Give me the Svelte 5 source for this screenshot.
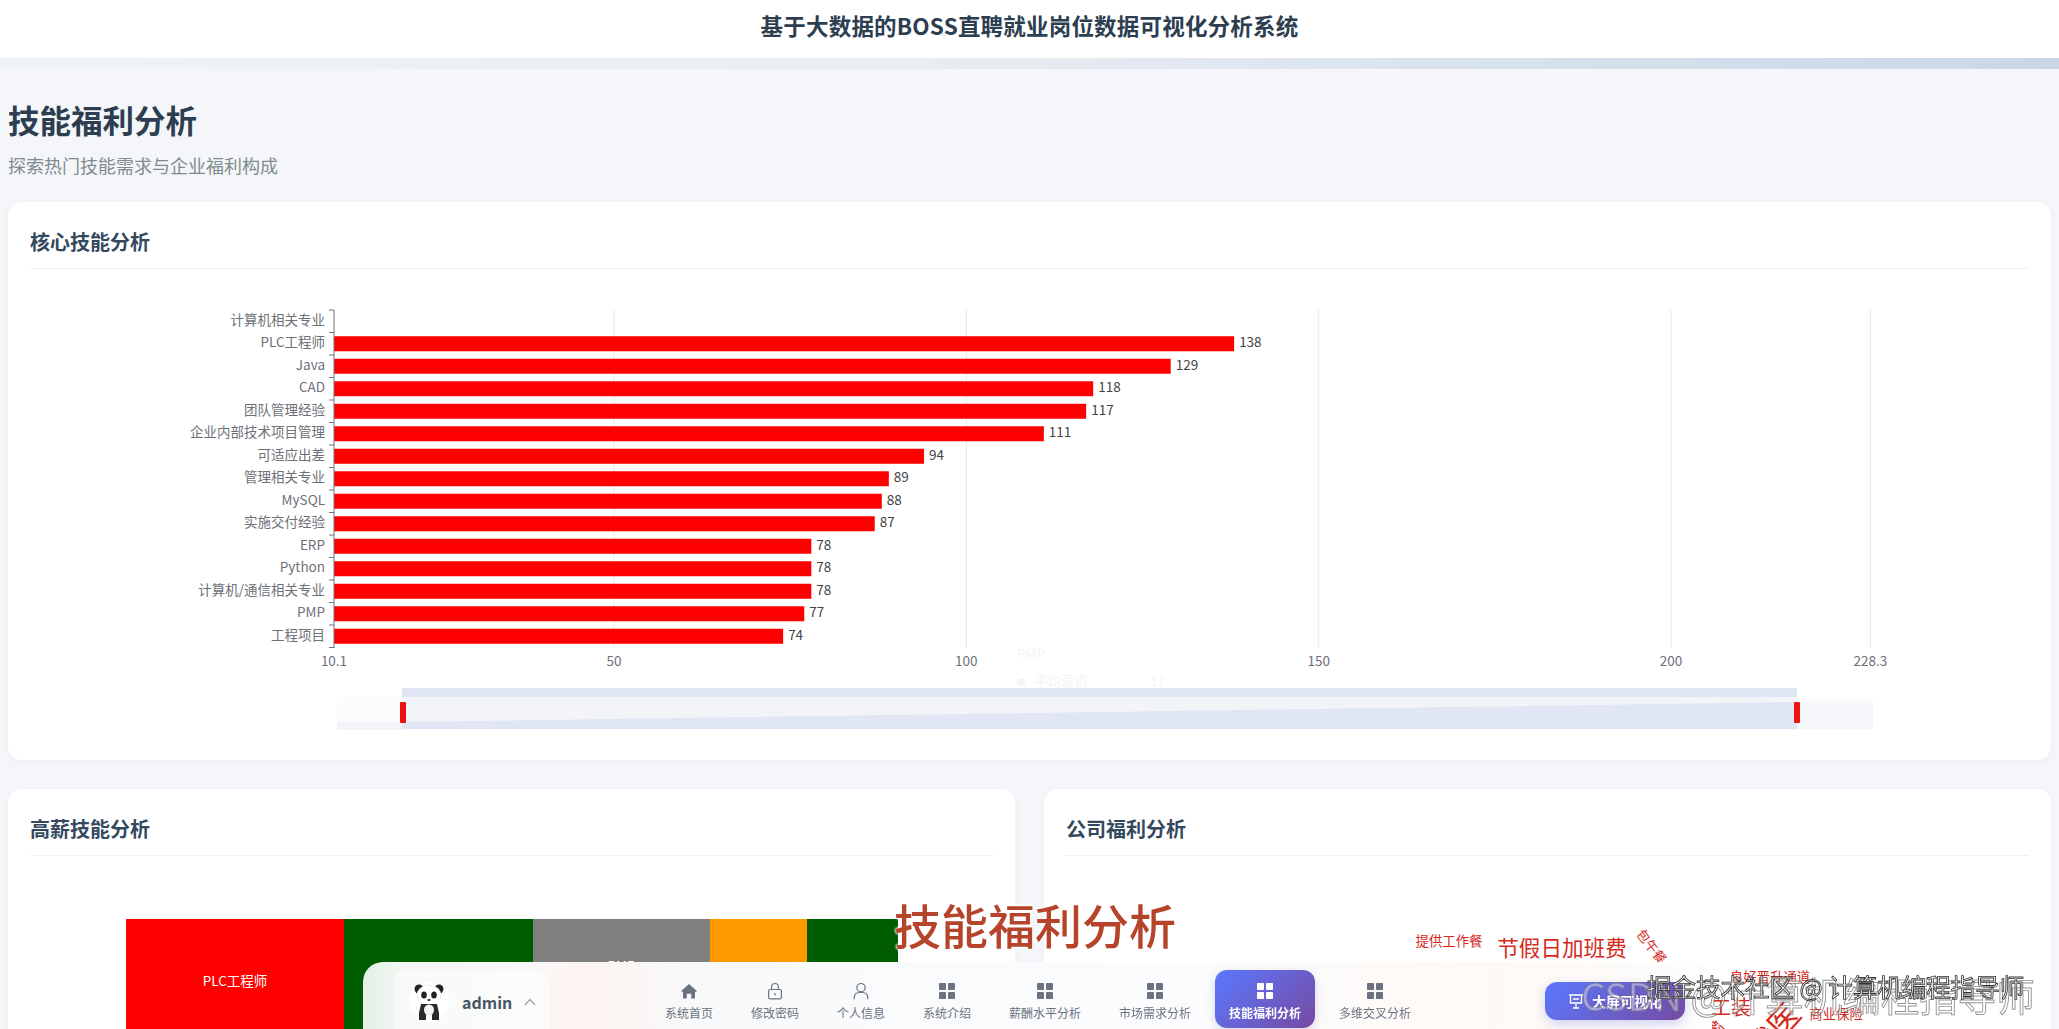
<script>
  // page coordinates are used as the chart's viewBox
  const skills = [
    ["计算机相关专业", null],
    ["PLC工程师", 138],
    ["Java", 129],
    ["CAD", 118],
    ["团队管理经验", 117],
    ["企业内部技术项目管理", 111],
    ["可适应出差", 94],
    ["管理相关专业", 89],
    ["MySQL", 88],
    ["实施交付经验", 87],
    ["ERP", 78],
    ["Python", 78],
    ["计算机/通信相关专业", 78],
    ["PMP", 77],
    ["工程项目", 74],
  ];
  const axisX = 334;
  const axisTop = 310;
  const band = 22.5;
  const scaleX = (v) => 614 + (v - 50) * 7.047;
  const ticks = [10.1, 50, 100, 150, 200, 228.3];

  const tiles = [
    { name: "PLC工程师", width: 218, color: "#ff0000", top: 52 },
    { name: "", width: 189, color: "#005c00", top: 0 },
    { name: "PMP", width: 177, color: "#808080", top: 37 },
    { name: "", width: 97, color: "#ff9900", top: 0 },
    { name: "", width: 91, color: "#005c00", top: 0 },
  ];

  const words = [
    { text: "提供工作餐", x: 1449, y: 940, size: 13.4, rot: 0 },
    { text: "节假日加班费", x: 1562, y: 946, size: 21.6, rot: 0 },
    { text: "包午餐", x: 1652, y: 946, size: 13, rot: 52 },
    { text: "带薪年假", x: 1445, y: 970, size: 17, rot: 0 },
    { text: "良好晋升通道", x: 1770, y: 976, size: 13.4, rot: 0 },
    { text: "工装", x: 1731, y: 1006, size: 20, rot: 0 },
    { text: "商业保险", x: 1836, y: 1013, size: 13.4, rot: 0 },
    { text: "就医", x: 1772, y: 1030, size: 31, rot: -48 },
    { text: "餐补", x: 1722, y: 1036, size: 20, rot: 40 },
  ];

  const navItems = [
    { label: "系统首页", icon: "home" },
    { label: "修改密码", icon: "lock" },
    { label: "个人信息", icon: "user" },
    { label: "系统介绍", icon: "grid" },
    { label: "薪酬水平分析", icon: "grid" },
    { label: "市场需求分析", icon: "grid" },
    { label: "技能福利分析", icon: "grid", active: true },
    { label: "多维交叉分析", icon: "grid" },
  ];
</script>

<header class="top">基于大数据的BOSS直聘就业岗位数据可视化分析系统</header>
<div class="strip"></div>

<main class="page">
  <h1>技能福利分析</h1>
  <p class="sub">探索热门技能需求与企业福利构成</p>

  <section class="card wide">
    <h2>核心技能分析</h2>
    <svg class="chart" width="1999" height="480" viewBox="30 269 1999 480">
      {#each ticks.slice(1) as t}
        <line x1={scaleX(t)} x2={scaleX(t)} y1={axisTop} y2="648" stroke="#e4e8f0" />
      {/each}

      {#each skills as [name, value], i}
        {@const cy = axisTop + band * i + band / 2}
        <text class="lbl" x="325" y={cy} text-anchor="end">{name}</text>
        {#if value}
          <rect x={axisX} y={cy - 7.5} width={scaleX(value) - axisX} height="15" fill="#ff0000" />
          <text class="val" x={scaleX(value) + 5} y={cy}>{value}</text>
        {/if}
      {/each}

      <line x1={axisX} x2={axisX} y1={axisTop} y2="648" stroke="#6e7079" />
      {#each skills as _, i}
        <line x1="329" x2={axisX} y1={axisTop + band * i} y2={axisTop + band * i} stroke="#6e7079" />
      {/each}
      <line x1="329" x2={axisX} y1="647.5" y2="647.5" stroke="#6e7079" />

      {#each ticks as t}
        <text class="lbl" x={t === 10.1 ? axisX : scaleX(t)} y="662" text-anchor="middle">{t}</text>
      {/each}

      <!-- tooltip left over while the page faded -->
      <g class="ghost">
        <text x="1017" y="655">PMP</text>
        <circle cx="1021" cy="682" r="4" fill="#5470c6" />
        <text x="1034" y="682">平均薪资</text>
        <text x="1150" y="682">17</text>
      </g>

      <!-- data zoom -->
      <rect x="337" y="697" width="1536" height="33" fill="#fcfcfd" />
      <rect x="337" y="722" width="65" height="8" fill="#f2f4f9" />
      <rect x="1797" y="701" width="76" height="28" fill="#f6f7fc" />
      <rect x="402" y="688" width="1395" height="9" fill="#dfe5f2" />
      <rect x="402" y="697" width="1395" height="32" fill="#f3f4f7" />
      <polygon points="402,722 1797,702 1797,729 402,729" fill="#e1e6f5" />
      <rect x="400" y="702" width="6" height="21" rx="1" fill="#ee1111" />
      <rect x="1794" y="702" width="6" height="21" rx="1" fill="#ee1111" />
    </svg>
  </section>

  <div class="row">
    <section class="card">
      <h2>高薪技能分析</h2>
      <div class="treemap">
        {#each tiles as tile}
          <div class="tile" style="width: {tile.width}px; background: {tile.color}; padding-top: {tile.top}px">{tile.name}</div>
        {/each}
      </div>
    </section>
    <section class="card">
      <h2>公司福利分析</h2>
      <div class="cloud">
        {#each words as w}
          <span
            class="word"
            style="left: {w.x - 1066}px; top: {w.y - 856}px; font-size: {w.size}px; transform: translate(-50%, -50%) rotate({w.rot}deg)">{w.text}</span>
        {/each}
      </div>
    </section>
  </div>
</main>

<nav class="dock">
  <div class="user">
    <span class="avatar">
      <svg width="34" height="38" viewBox="0 0 34 38">
        <circle cx="7" cy="6" r="4.5" fill="#222" />
        <circle cx="27" cy="6" r="4.5" fill="#222" />
        <ellipse cx="17" cy="12" rx="12" ry="10" fill="#fff" stroke="#ddd" stroke-width=".5" />
        <ellipse cx="12" cy="12" rx="2.8" ry="3.6" fill="#222" />
        <ellipse cx="22" cy="12" rx="2.8" ry="3.6" fill="#222" />
        <ellipse cx="17" cy="17" rx="1.6" ry="1.1" fill="#222" />
        <path d="M9 21h16l2 9v7h-7v-5h-6v5H7v-7z" fill="#2a2a2a" />
        <ellipse cx="17" cy="27" rx="5" ry="5.5" fill="#f4f4f4" />
      </svg>
    </span>
    <span class="name">admin</span>
    <svg class="chev" width="12" height="8" viewBox="0 0 12 8">
      <path d="M1 7l5-5.5L11 7" fill="none" stroke="#9aa3ad" stroke-width="1.2" />
    </svg>
  </div>

  <ul class="nav">
    {#each navItems as item}
      <li class:active={item.active}>
        {#if item.icon === "home"}
          <svg width="18" height="18" viewBox="0 0 24 24"><path d="M12 2.5L2 11.6c-.5.5-.2 1.4.6 1.4H4v7.5c0 .8.7 1.5 1.5 1.5H9v-6.5h6V22h3.5c.8 0 1.5-.7 1.5-1.5V13h1.4c.8 0 1.1-.9.6-1.4z" fill="currentColor" /></svg>
        {:else if item.icon === "lock"}
          <svg width="18" height="18" viewBox="0 0 24 24" fill="none" stroke="currentColor" stroke-width="1.6">
            <rect x="3.5" y="10" width="17" height="12.5" rx="2" />
            <path d="M7.5 10V6.5a4.5 4.5 0 0 1 9 0V10" />
            <path d="M12 14.5v3.5" />
          </svg>
        {:else if item.icon === "user"}
          <svg width="18" height="18" viewBox="0 0 24 24" fill="none" stroke="currentColor" stroke-width="1.6">
            <circle cx="12" cy="7.5" r="5.5" />
            <path d="M3 23v-2.5A6.5 6.5 0 0 1 9.5 14h5a6.5 6.5 0 0 1 6.5 6.5V23" />
          </svg>
        {:else}
          <svg width="18" height="18" viewBox="0 0 18 18" fill="currentColor">
            <rect x="1" y="1" width="7" height="7" rx=".8" />
            <rect x="10" y="1" width="7" height="7" rx=".8" />
            <rect x="1" y="10" width="7" height="7" rx=".8" />
            <rect x="10" y="10" width="7" height="7" rx=".8" />
          </svg>
        {/if}
        <span>{item.label}</span>
      </li>
    {/each}
  </ul>

  <button class="cta">
    <svg width="16" height="16" viewBox="0 0 16 16" fill="none" stroke="#fff" stroke-width="1.3">
      <path d="M1 2h14M2.5 2v8h11V2M8 10v5M5 15h6M5 6h6" />
    </svg>
    大屏可视化
  </button>
</nav>

<div class="caption">技能福利分析</div>
<div class="mark csdn">CSDN @计算机编程指导师</div>
<div class="mark juejin">掘金技术社区 @ 计算机编程指导师</div>

<style>
  :global(body) {
    margin: 0;
    height: 100vh;
    overflow: hidden;
    background: #f4f6f9;
    font-family: "Noto Sans CJK SC", "Noto Sans", sans-serif;
  }

  .top {
    height: 58px;
    line-height: 51px;
    background: #fff;
    text-align: center;
    font-size: 22.5px;
    letter-spacing: 0.2px;
    font-weight: 700;
    color: #2c3e50;
  }

  .strip {
    height: 11px;
    background: linear-gradient(90deg, #f0f3f6 0%, #e8edf2 45%, #c9d7e8 100%);
  }

  .page {
    padding: 0 8px;
  }

  h1 {
    margin: 28px 0 0;
    font-size: 31.5px;
    line-height: 44px;
    font-weight: 700;
    color: #2c3e50;
  }

  .sub {
    margin: 11px 0 24px;
    font-size: 18px;
    line-height: 26px;
    color: #7f8c8d;
  }

  .card {
    background: #fff;
    border-radius: 14px;
    padding: 22px 22px 0;
    box-shadow: 0 2px 10px rgba(40, 60, 90, 0.04);
  }

  .wide {
    padding-bottom: 11px;
  }

  h2 {
    margin: 0;
    padding-bottom: 8px;
    border-bottom: 1px solid #eef0f3;
    font-size: 20px;
    line-height: 36px;
    font-weight: 700;
    color: #34495e;
  }

  .chart {
    display: block;
  }

  .chart text {
    dominant-baseline: middle;
    font-size: 13.5px;
  }

  .lbl {
    fill: #6e7079;
  }

  .val {
    fill: #444;
  }

  .ghost {
    opacity: 0.07;
    fill: #666;
  }

  .row {
    display: grid;
    grid-template-columns: 1fr 1fr;
    gap: 29px;
    margin-top: 29px;
  }

  .treemap {
    display: flex;
    margin: 63px 0 0 96px;
    height: 200px;
  }

  .tile {
    box-sizing: border-box;
    text-align: center;
    font-size: 13.5px;
    line-height: 18px;
    color: #fff;
  }

  .cloud {
    position: relative;
    height: 173px;
    overflow: hidden;
    margin-right: -22px;
  }

  .word {
    position: absolute;
    white-space: nowrap;
    color: #d5291c;
  }

  .dock {
    position: fixed;
    left: 363px;
    top: 962px;
    width: 1349px;
    height: 67px;
    box-sizing: border-box;
    display: flex;
    align-items: flex-start;
    padding: 8px 27px 0 30px;
    border-radius: 20px 20px 0 0;
    background: linear-gradient(90deg, #e3f1e3 0%, #f2f6f4 3%, #f8f8f8 13%, #fdf3ef 16%, #f8f9fa 24%, #fbfcfe 60%, #fef9f4 84%, #fdfdfd 100%);
  }

  .user {
    width: 157px;
    height: 59px;
    box-sizing: border-box;
    display: flex;
    align-items: center;
    padding: 5px 0 0 16px;
    border-radius: 12px 12px 0 0;
    background: rgba(255, 255, 255, 0.45);
  }

  .avatar {
    width: 40px;
    height: 40px;
    border-radius: 50%;
    background: #fff;
    display: flex;
    align-items: center;
    justify-content: center;
  }

  .name {
    margin-left: 13px;
    font-size: 16px;
    font-weight: 600;
    color: #4a5568;
  }

  .chev {
    margin-left: 12px;
  }

  .nav {
    display: flex;
    gap: 10px;
    margin: 0 0 0 101px;
    padding: 0;
    list-style: none;
  }

  .nav li {
    height: 58px;
    box-sizing: border-box;
    padding: 12px 14px 0;
    display: flex;
    flex-direction: column;
    align-items: center;
    gap: 5px;
    border-radius: 12px;
    color: #6b7280;
    font-size: 12px;
    line-height: 16px;
    white-space: nowrap;
  }

  .nav li.active {
    background: linear-gradient(135deg, #5a78ff, #764ba2);
    color: #fff;
    font-weight: 600;
    box-shadow: 0 3px 10px rgba(102, 110, 220, 0.25);
  }

  .cta {
    margin: 12px 0 0 auto;
    width: 140px;
    height: 38px;
    display: flex;
    align-items: center;
    justify-content: center;
    gap: 8px;
    border: 0;
    border-radius: 12px;
    background: linear-gradient(135deg, #5a78ff, #764ba2);
    box-shadow: 0 4px 12px rgba(102, 110, 220, 0.3);
    color: #fff;
    font-family: inherit;
    font-size: 14px;
    font-weight: 600;
  }

  .caption {
    position: fixed;
    left: 894px;
    top: 890px;
    font-size: 47px;
    line-height: 68px;
    font-weight: 500;
    color: #b5442b;
    white-space: nowrap;
    text-shadow: 0 0 3px #fff, 0 0 3px #fff, 0 0 2px #fff;
  }

  .mark {
    position: fixed;
    white-space: nowrap;
  }

  .csdn {
    left: 1581px;
    top: 966px;
    width: 478px;
    overflow: hidden;
    font-size: 38.5px;
    line-height: 56px;
    color: rgba(255, 255, 255, 0.4);
    -webkit-text-stroke: 0.9px rgba(120, 120, 120, 0.8);
  }

  .juejin {
    left: 1647px;
    top: 969px;
    font-size: 24.5px;
    line-height: 36px;
    color: #f4f4f4;
    -webkit-text-stroke: 0.8px #333;
  }
</style>
